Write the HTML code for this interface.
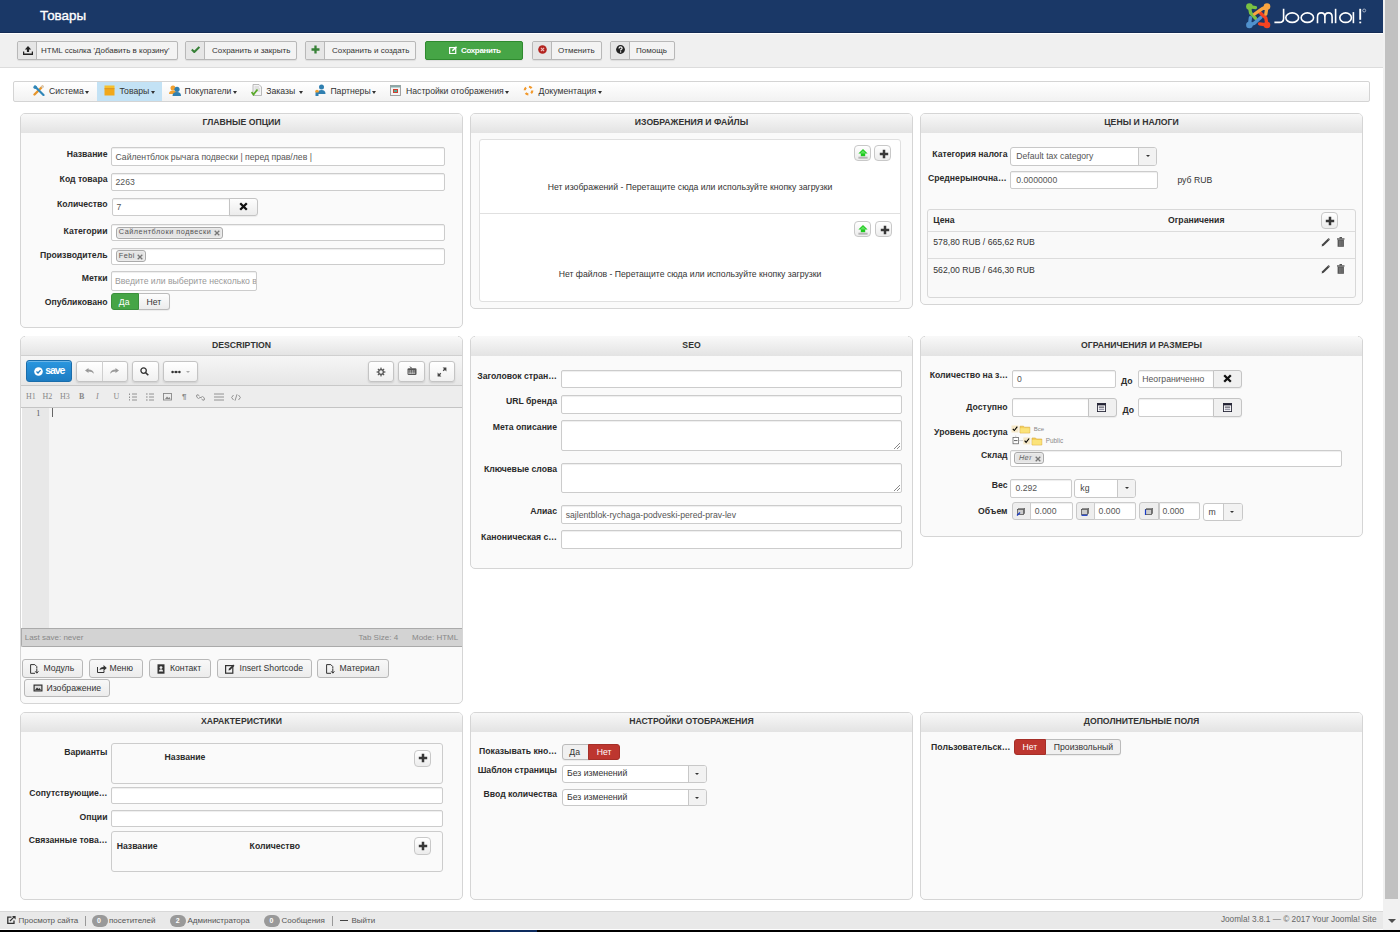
<!DOCTYPE html>
<html><head><meta charset="utf-8">
<style>
*{box-sizing:border-box;margin:0;padding:0}
html,body{width:1400px;height:932px;overflow:hidden;background:#fff}
body{position:relative;font-family:"Liberation Sans",sans-serif;font-size:8.67px;color:#333;line-height:10px}
.a{position:absolute}
.hdr{left:0;top:0;width:1383px;height:33px;background:#1a3867;border-bottom:1px solid #142c55}
.ptitle{left:40px;top:8px;font-size:13.4px;color:#fff;line-height:16px;-webkit-text-stroke:0.35px #fff}
.tbar{left:0;top:33px;width:1383px;height:35px;background:#f0f0f0;border-top:1px solid #fff;border-bottom:1px solid #dcdcdc}
.tb{position:absolute;top:41px;height:19px;border:1px solid #b8b8b8;border-radius:2px;background:#f3f3f3;box-shadow:0 1px 1px rgba(0,0,0,.08)}
.tb .ic{position:absolute;left:0;top:0;bottom:0;background:#e6e6e6;border-right:1px solid #b8b8b8;border-radius:2px 0 0 2px}
.tb .tx{position:absolute;top:4px;font-size:8px;color:#333;line-height:10px;white-space:nowrap}
.menu{left:13px;top:81px;width:1357px;height:21px;border:1px solid #d4d4d4;border-radius:2px;background:linear-gradient(#fff,#f2f2f2)}
.mi{position:absolute;top:5px;font-size:8.67px;color:#333;white-space:nowrap;line-height:10px}
.car{display:inline-block;width:0;height:0;border-left:2.8px solid transparent;border-right:2.8px solid transparent;border-top:3.2px solid #333;vertical-align:0px;margin-left:1.5px}
.pn{position:absolute;border:1px solid #d5d5d5;border-radius:5px;background:#fafafa;overflow:hidden}
.ph{position:absolute;left:0;top:0;right:0;height:19px;background:linear-gradient(#f8f8f8,#e3e3e3);text-align:center;font-weight:bold;line-height:10px;padding-top:2.8px;color:#333}
.sb{left:1383px;top:0;width:17px;height:932px;background:#f1f1f1}
.thumb{left:1385px;top:0;width:13px;height:899px;background:#c1c1c1}
.foot{left:0;top:911px;width:1383px;height:18px;background:#e9e9e9;border-top:1px solid #d8d8d8}
.black{left:0;top:930px;width:1400px;height:2px;background:#000}
.lbl{position:absolute;font-weight:bold;white-space:nowrap;text-align:right;color:#2a2a2a}
.in{position:absolute;background:#fff;border:1px solid #ccc;border-radius:2px;box-shadow:inset 0 1px 1px rgba(0,0,0,.07)}
.it{position:absolute;color:#555;white-space:nowrap}

.t{position:absolute;white-space:nowrap;line-height:10px}
.chip{position:absolute;background:#e4e4e4;border:1px solid #aaa;border-radius:3px;box-shadow:inset 0 0 2px #fff}
.btn{position:absolute;background:linear-gradient(#fdfdfd,#ececec);border:1px solid #bbb;border-radius:3px;box-shadow:0 1px 1px rgba(0,0,0,.06)}
.xsvg{position:absolute}

.sbtn{position:absolute;width:17px;height:16px;background:linear-gradient(#fff,#ececec);border:1px solid #c8c8c8;border-radius:4px}
.plus{position:absolute;width:10px;height:10px}
.sel{position:absolute;background:#fff;border:1px solid #c8c8c8;border-radius:3px}
.sel .dd{position:absolute;right:0;top:0;bottom:0;width:18px;background:#f2f2f2;border-left:1px solid #c8c8c8;border-radius:0 2px 2px 0}
.sel .dd:after{content:"";position:absolute;left:6.5px;top:7px;border-left:2.5px solid transparent;border-right:2.5px solid transparent;border-top:2.6px solid #333}

.eb{position:absolute;background:linear-gradient(#fff,#f0f0f0);border:1px solid #c4c4c4;border-radius:3px;box-shadow:0 1px 2px rgba(0,0,0,.12)}
.md{position:absolute;top:392px;font-family:"Liberation Serif",serif;font-size:8px;color:#888;line-height:10px}
.ib{position:absolute;top:659px;height:18.5px;background:linear-gradient(#f8f8f8,#ececec);border:1px solid #b8b8b8;border-radius:3px}
.ib .t{top:3px;color:#333}

.ta:after{content:"";position:absolute;right:1px;bottom:1px;width:6px;height:6px;background:linear-gradient(135deg,transparent 45%,#888 45%,#888 55%,transparent 55%,transparent 70%,#888 70%,#888 80%,transparent 80%)}
.addon{position:absolute;background:#eee;border:1px solid #c8c8c8;border-radius:3px}
</style></head><body>
<div class="a hdr"></div>
<div class="a ptitle">Товары</div>
<div class="a tbar"></div>
<div class="tb" style="left:17px;width:161px"><div class="ic" style="width:19.2px"><svg class="a" style="left:5px;top:4px" width="10" height="9" viewBox="0 0 10 9"><path d="M5 0L8.2 3.4H6.1V6H3.9V3.4H1.8Z" fill="#222"/><path d="M0.5 5.5V8.3H9.5V5.5" stroke="#222" stroke-width="1.5" fill="none"/></svg></div><div class="tx" style="left:23px">HTML ссылка 'Добавить в корзину'</div></div>
<div class="tb" style="left:185px;width:112px"><div class="ic" style="width:19.2px"><svg class="a" style="left:5.2px;top:4.2px" width="9" height="7" viewBox="0 0 9 7"><path d="M0.8 3.6L3.3 6L8.4 0.9" stroke="#378137" stroke-width="2.1" fill="none"/></svg></div><div class="tx" style="left:26px">Сохранить и закрыть</div></div>
<div class="tb" style="left:305px;width:111px"><div class="ic" style="width:19.2px"><svg class="a" style="left:5.3px;top:3.2px" width="9" height="9" viewBox="0 0 9 9"><path d="M4.5 0.5V8.5M0.5 4.5H8.5" stroke="#378137" stroke-width="2.3"/></svg></div><div class="tx" style="left:26px">Сохранить и создать</div></div>
<div class="tb" style="left:425px;width:98px;background:#46a546;border-color:#2f8a2f"><svg class="a" style="left:23px;top:3.8px" width="8.3" height="8.3" viewBox="0 0 9 9"><rect x="0.7" y="1.7" width="6.6" height="6.6" fill="none" stroke="#fff" stroke-width="1.3"/><path d="M3.2 5.8L3.6 4.2L7.6 0.3L8.7 1.4L4.7 5.4Z" fill="#fff"/></svg><div class="tx" style="left:35px;color:#fff;font-weight:bold;letter-spacing:-0.35px">Сохранить</div></div>
<div class="tb" style="left:532px;width:70px"><div class="ic" style="width:19.2px"><svg class="a" style="left:4.8px;top:3px" width="9" height="9" viewBox="0 0 9 9"><circle cx="4.5" cy="4.5" r="4.3" fill="#b3231f"/><path d="M2.9 2.9L6.1 6.1M6.1 2.9L2.9 6.1" stroke="#f0c0c0" stroke-width="1.1"/></svg></div><div class="tx" style="left:25px">Отменить</div></div>
<div class="tb" style="left:610px;width:65px"><div class="ic" style="width:19.2px"><svg class="a" style="left:4.8px;top:3px" width="9" height="9" viewBox="0 0 9 9"><circle cx="4.5" cy="4.5" r="4.4" fill="#222"/><path d="M3 3.4Q3 1.9 4.6 1.9Q6.1 1.9 6.1 3.2Q6.1 4 5.1 4.5Q4.6 4.8 4.6 5.5" stroke="#fff" stroke-width="1.2" fill="none"/><rect x="4" y="6.3" width="1.2" height="1.2" fill="#fff"/></svg></div><div class="tx" style="left:25px">Помощь</div></div>

<div class="a menu"></div>
<div class="a" style="left:97px;top:82px;width:65px;height:19px;background:#c3e2f5"></div>
<svg class="a" style="left:33px;top:85px" width="12" height="11" viewBox="0 0 12 11"><path d="M1.5 9.5L9.5 1.5" stroke="#e8962a" stroke-width="2.4" stroke-linecap="round"/><path d="M2 1.5L10.5 10" stroke="#2f86b8" stroke-width="2.2" stroke-linecap="round"/><circle cx="2.2" cy="2.2" r="1.8" fill="#2f86b8"/><circle cx="9.5" cy="1.8" r="1.2" fill="#cfcfcf"/></svg>
<div class="mi" style="left:49px;top:86px">Система<span class="car"></span></div>
<svg class="a" style="left:104px;top:85px" width="11" height="11" viewBox="0 0 11 11"><rect x="0.5" y="0.5" width="10" height="3" fill="#f6c02d"/><rect x="0.5" y="3.5" width="10" height="7" fill="#f1a81b"/><rect x="0.5" y="3.3" width="10" height="0.8" fill="#d98b10"/></svg>
<div class="mi" style="left:119.5px;top:86px">Товары<span class="car"></span></div>
<svg class="a" style="left:169px;top:85px" width="12" height="11" viewBox="0 0 12 11"><circle cx="4" cy="3" r="2.5" fill="#f0a030"/><path d="M0 9Q0 5.5 4 5.5Q8 5.5 8 9Z" fill="#f0a030"/><circle cx="8" cy="4.3" r="2.6" fill="#2f7fb0"/><path d="M3.5 11Q3.5 7 8 7Q12 7 12 11Z" fill="#2f7fb0"/></svg>
<div class="mi" style="left:184.5px;top:86px">Покупатели<span class="car"></span></div>
<svg class="a" style="left:251px;top:84px" width="11" height="12" viewBox="0 0 11 12"><path d="M2 0.5H8L10.5 3V11.5H2Z" fill="#f4f4f4" stroke="#aaa" stroke-width="0.8"/><path d="M3.5 3H8M3.5 5H9M3.5 7H9" stroke="#bbb" stroke-width="0.7"/><path d="M0.5 8L2.5 10.5L6.5 5.5" stroke="#5aaa2a" stroke-width="1.8" fill="none"/></svg>
<div class="mi" style="left:266.3px;top:86px">Заказы <span class="car"></span></div>
<svg class="a" style="left:314px;top:84px" width="12" height="12" viewBox="0 0 12 12"><circle cx="7.5" cy="3" r="2.5" fill="#2f7fb0"/><path d="M3.5 10Q3.5 6 7.5 6Q11.5 6 11.5 10Z" fill="#2f7fb0"/><circle cx="3" cy="7.5" r="1.8" fill="#f0a030"/><rect x="1.5" y="8.5" width="3" height="3.5" fill="#2f7fb0"/></svg>
<div class="mi" style="left:330.4px;top:86px">Партнеры<span class="car"></span></div>
<svg class="a" style="left:390px;top:85px" width="11" height="11" viewBox="0 0 11 11"><rect x="0.5" y="0.5" width="10" height="10" fill="#f4f4f4" stroke="#999" stroke-width="0.9"/><rect x="0.5" y="0.5" width="10" height="2" fill="#8aa"/><rect x="3" y="4" width="5" height="4" fill="#d04030"/><rect x="4" y="5" width="3" height="2" fill="#5a9"/></svg>
<div class="mi" style="left:406px;top:86px">Настройки отображения<span class="car"></span></div>
<svg class="a" style="left:523px;top:85px" width="11" height="11" viewBox="0 0 11 11"><circle cx="5.5" cy="5.5" r="3.8" fill="none" stroke="#f29a2e" stroke-width="2.2" stroke-dasharray="3 2.97"/></svg>
<div class="mi" style="left:538.6px;top:86px">Документация<span class="car"></span></div>


<div class="pn" style="left:20px;top:113px;width:443px;height:215px"><div class="ph">ГЛАВНЫЕ ОПЦИИ</div></div>
<div class="pn" style="left:470px;top:113px;width:443px;height:196px"><div class="ph">ИЗОБРАЖЕНИЯ И ФАЙЛЫ</div></div>
<div class="pn" style="left:920px;top:113px;width:443px;height:192px"><div class="ph">ЦЕНЫ И НАЛОГИ</div></div>
<div class="pn" style="left:20px;top:336px;width:443px;height:368px"><div class="ph">DESCRIPTION</div></div>
<div class="pn" style="left:470px;top:336px;width:443px;height:233px"><div class="ph">SEO</div></div>
<div class="pn" style="left:920px;top:336px;width:443px;height:201px"><div class="ph">ОГРАНИЧЕНИЯ И РАЗМЕРЫ</div></div>
<div class="pn" style="left:20px;top:712px;width:443px;height:188px"><div class="ph">ХАРАКТЕРИСТИКИ</div></div>
<div class="pn" style="left:470px;top:712px;width:443px;height:188px"><div class="ph">НАСТРОЙКИ ОТОБРАЖЕНИЯ</div></div>
<div class="pn" style="left:920px;top:712px;width:443px;height:188px"><div class="ph">ДОПОЛНИТЕЛЬНЫЕ ПОЛЯ</div></div>


<div class="a" style="left:25px;top:336px;width:433px;height:1px;background:#f8f8f8"></div><div class="a" style="left:475px;top:336px;width:433px;height:1px;background:#f8f8f8"></div><div class="a" style="left:925px;top:336px;width:433px;height:1px;background:#f8f8f8"></div>
<!-- P1 content -->
<div class="t lbl" style="left:20px;width:87.5px;top:149px">Название</div>
<div class="in" style="left:111px;top:147px;width:334px;height:19px"></div>
<div class="t it" style="left:115.5px;top:152px">Сайлентблок рычага подвески | перед прав/лев |</div>
<div class="t lbl" style="left:20px;width:87.5px;top:174px">Код товара</div>
<div class="in" style="left:111px;top:173px;width:334px;height:18px"></div>
<div class="t it" style="left:115.5px;top:177px">2263</div>
<div class="t lbl" style="left:20px;width:87.5px;top:199px">Количество</div>
<div class="in" style="left:112px;top:198px;width:118px;height:18px;border-radius:2px 0 0 2px"></div>
<div class="t it" style="left:116.5px;top:202px">7</div>
<div class="btn" style="left:229px;top:198px;width:29px;height:18px;border-radius:0 3px 3px 0;border-color:#c4c4c4"></div>
<svg class="xsvg" style="left:239px;top:202px" width="9" height="9" viewBox="0 0 9 9"><path d="M1.2 1.2L7.8 7.8M7.8 1.2L1.2 7.8" stroke="#111" stroke-width="2.3"/></svg>
<div class="t lbl" style="left:20px;width:87.5px;top:226px">Категории</div>
<div class="in" style="left:111px;top:224px;width:334px;height:17px"></div>
<div class="chip" style="left:115.5px;top:226.5px;width:107px;height:12px"></div>
<div class="t" style="left:118.8px;top:227px;font-size:7.3px;letter-spacing:0.52px;color:#555">Сайлентблоки подвески</div>
<svg class="xsvg" style="left:214px;top:230px" width="6" height="6" viewBox="0 0 6 6"><path d="M0.7 0.7L5.3 5.3M5.3 0.7L0.7 5.3" stroke="#777" stroke-width="1.3"/></svg>
<div class="t lbl" style="left:20px;width:87.5px;top:249.5px">Производитель</div>
<div class="in" style="left:111px;top:248px;width:334px;height:17px"></div>
<div class="chip" style="left:115.5px;top:250px;width:30px;height:12px"></div>
<div class="t" style="left:118.8px;top:250.5px;font-size:7.3px;letter-spacing:0.5px;color:#555">Febi</div>
<svg class="xsvg" style="left:137px;top:254px" width="6" height="6" viewBox="0 0 6 6"><path d="M0.7 0.7L5.3 5.3M5.3 0.7L0.7 5.3" stroke="#777" stroke-width="1.3"/></svg>
<div class="t lbl" style="left:20px;width:87.5px;top:273px">Метки</div>
<div class="in" style="left:111px;top:271px;width:146px;height:20px;overflow:hidden"><div class="t" style="left:3px;top:4px;color:#999">Введите или выберите несколько в</div></div>
<div class="t lbl" style="left:20px;width:87.5px;top:297px">Опубликовано</div>
<div class="a" style="left:111px;top:293px;width:28px;height:17px;background:#46a546;border:1px solid #3c8f3c;border-radius:3px 0 0 3px"></div>
<div class="t" style="left:118.8px;top:297px;color:#fff">Да</div>
<div class="btn" style="left:139px;top:293px;width:31px;height:17px;border-radius:0 3px 3px 0;border-left:none"></div>
<div class="t" style="left:146.5px;top:297px;color:#333">Нет</div>


<!-- P2 content -->
<div class="a" style="left:479px;top:139px;width:422px;height:163px;background:#fff;border:1px solid #e0e0e0;border-radius:3px"></div>
<div class="a" style="left:480px;top:213px;width:420px;height:1px;background:#e0e0e0"></div>
<div class="sbtn" style="left:854px;top:145px"></div><svg class="a" style="left:857.5px;top:148.5px" width="10" height="10" viewBox="0 0 10 10"><path d="M5 0L9.6 4.6H7.2V7.3H2.8V4.6H0.4Z" fill="#1ec81e"/><path d="M5 1.2L8 4.4H2Z" fill="#8cf58c" opacity=".55"/><rect x="0.4" y="7.7" width="9.2" height="2" fill="#b5b5b5"/></svg>
<div class="sbtn" style="left:874px;top:145px"></div><svg class="a" style="left:878.5px;top:148.5px" width="10" height="10" viewBox="0 0 10 10"><path d="M5 0.8V9.2M0.8 5H9.2" stroke="#383838" stroke-width="2.5"/></svg>
<div class="t" style="left:479px;width:422px;text-align:center;top:182px;color:#333">Нет изображений - Перетащите сюда или используйте кнопку загрузки</div>
<div class="sbtn" style="left:854px;top:221px"></div><svg class="a" style="left:857.5px;top:224.5px" width="10" height="10" viewBox="0 0 10 10"><path d="M5 0L9.6 4.6H7.2V7.3H2.8V4.6H0.4Z" fill="#1ec81e"/><path d="M5 1.2L8 4.4H2Z" fill="#8cf58c" opacity=".55"/><rect x="0.4" y="7.7" width="9.2" height="2" fill="#b5b5b5"/></svg>
<div class="sbtn" style="left:875px;top:221px"></div><svg class="a" style="left:879.5px;top:224.5px" width="10" height="10" viewBox="0 0 10 10"><path d="M5 0.8V9.2M0.8 5H9.2" stroke="#383838" stroke-width="2.5"/></svg>
<div class="t" style="left:479px;width:422px;text-align:center;top:269px;color:#333">Нет файлов - Перетащите сюда или используйте кнопку загрузки</div>

<!-- P3 content -->
<div class="t lbl" style="left:920px;width:87.5px;top:148.5px">Категория налога</div>
<div class="sel" style="left:1010px;top:147px;width:147px;height:19px"><div class="dd"></div></div>
<div class="t it" style="left:1016.3px;top:151px">Default tax category</div>
<div class="t lbl" style="left:920px;width:87.5px;top:172.5px;text-align:left;padding-left:8px">Среднерыночна…</div>
<div class="in" style="left:1010px;top:171px;width:148px;height:18px"></div>
<div class="t it" style="left:1016.3px;top:175px">0.0000000</div>
<div class="t" style="left:1177.4px;top:175px;color:#333">руб RUB</div>
<div class="a" style="left:927px;top:209px;width:429px;height:89px;background:#f9f9f9;border:1px solid #d8d8d8;border-radius:3px"></div>
<div class="a" style="left:928px;top:231px;width:427px;height:1px;background:#dcdcdc"></div>
<div class="a" style="left:928px;top:258px;width:427px;height:1px;background:#dcdcdc"></div>
<div class="t lbl" style="left:933.3px;top:215px;text-align:left">Цена</div>
<div class="t lbl" style="left:1168px;top:215px;text-align:left">Ограничения</div>
<div class="sbtn" style="left:1321px;top:212px;height:17px"></div><svg class="a" style="left:1325px;top:216px" width="10" height="10" viewBox="0 0 10 10"><path d="M5 0.8V9.2M0.8 5H9.2" stroke="#383838" stroke-width="2.5"/></svg>
<div class="t" style="left:933.3px;top:237px;color:#333">578,80 RUB / 665,62 RUB</div>
<div class="t" style="left:933.3px;top:264.5px;color:#333">562,00 RUB / 646,30 RUB</div>
<svg class="a" style="left:1321px;top:237px" width="10" height="10" viewBox="0 0 10 10"><path d="M0.6 9.4L1.2 7.3L7.6 0.9L9.1 2.4L2.7 8.8Z" fill="#444"/><path d="M7 1.5L8.5 3" stroke="#fff" stroke-width="0.5"/></svg><svg class="a" style="left:1337px;top:237px" width="8" height="10" viewBox="0 0 8 10"><rect x="0" y="1.3" width="7.5" height="1.3" fill="#555"/><rect x="2.5" y="0" width="2.5" height="1.5" fill="#555"/><path d="M0.6 2.6H6.9V9.8H0.6Z" fill="#555"/><path d="M2.4 3.5V9M3.75 3.5V9M5.1 3.5V9" stroke="#999" stroke-width="0.5"/></svg><svg class="a" style="left:1321px;top:264px" width="10" height="10" viewBox="0 0 10 10"><path d="M0.6 9.4L1.2 7.3L7.6 0.9L9.1 2.4L2.7 8.8Z" fill="#444"/><path d="M7 1.5L8.5 3" stroke="#fff" stroke-width="0.5"/></svg><svg class="a" style="left:1337px;top:264px" width="8" height="10" viewBox="0 0 8 10"><rect x="0" y="1.3" width="7.5" height="1.3" fill="#555"/><rect x="2.5" y="0" width="2.5" height="1.5" fill="#555"/><path d="M0.6 2.6H6.9V9.8H0.6Z" fill="#555"/><path d="M2.4 3.5V9M3.75 3.5V9M5.1 3.5V9" stroke="#999" stroke-width="0.5"/></svg>

<!-- P4 content: description editor -->
<div class="a" style="left:21px;top:355px;width:441px;height:31px;background:linear-gradient(#f6f6f6,#e6e6e6);border-top:1px solid #d0d0d0;border-bottom:1px solid #c8c8c8"></div>
<div class="a" style="left:26px;top:360px;width:46px;height:22px;background:linear-gradient(#2a97e0,#1d7cc2);border:1px solid #1a6dab;border-radius:3px;box-shadow:inset 0 1px 0 rgba(255,255,255,.3)"></div>
<svg class="a" style="left:33.9px;top:366.5px" width="9" height="9" viewBox="0 0 9 9"><circle cx="4.5" cy="4.5" r="4.3" fill="#fff"/><path d="M2.5 4.6L4 6L6.6 3.1" stroke="#1d7cc2" stroke-width="1.3" fill="none"/></svg>
<div class="t" style="left:45.3px;top:364.3px;font-size:10.5px;font-weight:bold;letter-spacing:-1.1px;color:#fff;line-height:12px">save</div>
<div class="eb" style="left:75.5px;top:360.5px;width:52px;height:21px"></div>
<div class="a" style="left:101.5px;top:361px;width:1px;height:20px;background:#cfcfcf"></div>
<svg class="a" style="left:85px;top:368px" width="9" height="6" viewBox="0 0 9 6"><path d="M0 2.5L3.5 0V1.6Q8 1.6 9 5.8Q7 3.6 3.5 3.6V5Z" fill="#999"/></svg>
<svg class="a" style="left:110px;top:368px" width="9" height="6" viewBox="0 0 9 6"><path d="M9 2.5L5.5 0V1.6Q1 1.6 0 5.8Q2 3.6 5.5 3.6V5Z" fill="#999"/></svg>
<div class="eb" style="left:131.5px;top:360.5px;width:27px;height:21px"></div>
<svg class="a" style="left:140px;top:367px" width="9" height="9" viewBox="0 0 9 9"><circle cx="3.6" cy="3.6" r="2.7" fill="none" stroke="#333" stroke-width="1.3"/><path d="M5.5 5.5L8.3 8.3" stroke="#333" stroke-width="1.6"/></svg>
<div class="eb" style="left:162.5px;top:360.5px;width:35px;height:21px"></div>
<svg class="a" style="left:170.5px;top:369.5px" width="20" height="4" viewBox="0 0 20 4"><circle cx="1.5" cy="2" r="1.2" fill="#333"/><circle cx="5" cy="2" r="1.2" fill="#333"/><circle cx="8.5" cy="2" r="1.2" fill="#333"/><rect x="1.5" y="1.6" width="7" height="0.8" fill="#333"/><path d="M15 1L19 1L17 3Z" fill="#aaa"/></svg>
<div class="eb" style="left:367.5px;top:360.5px;width:26px;height:21px"></div>
<svg class="a" style="left:376px;top:366.5px" width="10" height="10" viewBox="0 0 10 10"><g fill="#555"><circle cx="5" cy="5" r="2.9"/><rect x="4.35" y="0.6" width="1.3" height="8.8"/><rect x="0.6" y="4.35" width="8.8" height="1.3"/><rect x="4.35" y="0.6" width="1.3" height="8.8" transform="rotate(45 5 5)"/><rect x="4.35" y="0.6" width="1.3" height="8.8" transform="rotate(-45 5 5)"/></g><circle cx="5" cy="5" r="1.7" fill="#f2f2f2"/></svg>
<div class="eb" style="left:397.5px;top:360.5px;width:27px;height:21px"></div>
<svg class="a" style="left:406.5px;top:366px" width="10" height="10" viewBox="0 0 10 10"><path d="M3 0.5Q3 2 5 2" stroke="#444" stroke-width="0.8" fill="none"/><rect x="0.5" y="2.2" width="9" height="6.8" rx="1.2" fill="#555"/><path d="M2 4V8M3.7 4V8M5.4 4V8M7.1 4V8" stroke="#ddd" stroke-width="0.6"/><rect x="1.6" y="6.8" width="6.6" height="0.7" fill="#ddd"/></svg>
<div class="eb" style="left:428.5px;top:360.5px;width:26px;height:21px"></div>
<svg class="a" style="left:436.5px;top:366.5px" width="10" height="10" viewBox="0 0 10 10"><path d="M1.5 8.5L3.8 6.2M8.5 1.5L6.2 3.8" stroke="#444" stroke-width="1.3"/><path d="M5.6 0.6H9.4V4.4Z M0.6 5.6V9.4H4.4Z" fill="#444"/></svg>
<div class="a" style="left:21px;top:386px;width:441px;height:22px;background:#ededed;border-bottom:1px solid #c4c4c4"></div>
<div class="md" style="left:26px">H1</div><div class="md" style="left:42.5px">H2</div><div class="md" style="left:60px">H3</div>
<div class="md" style="left:79px;font-weight:bold">B</div><div class="md" style="left:96px;font-style:italic">I</div><div class="md" style="left:113.5px">U</div>
<svg class="a" style="left:128.5px;top:393px" width="8" height="8" viewBox="0 0 8 8"><path d="M3 1H8M3 4H8M3 7H8" stroke="#888" stroke-width="0.9"/><path d="M0.5 0.5V2M0.5 3.5V5M0.5 6.2V7.5" stroke="#888" stroke-width="0.9"/></svg>
<svg class="a" style="left:145.5px;top:393px" width="8" height="8" viewBox="0 0 8 8"><path d="M3 1H8M3 4H8M3 7H8" stroke="#888" stroke-width="0.9"/><path d="M0 1H1.6M0 4H1.6M0 7H1.6" stroke="#888" stroke-width="1.2"/></svg>
<svg class="a" style="left:162.5px;top:393px" width="9" height="8" viewBox="0 0 9 8"><rect x="0.5" y="0.5" width="8" height="6.5" fill="none" stroke="#888" stroke-width="0.9"/><path d="M2 6L4 3.5L5.5 5L6.5 4L7.5 6Z" fill="#888"/></svg>
<div class="md" style="left:182px;font-weight:bold;font-family:'Liberation Sans'">&#182;</div>
<svg class="a" style="left:196px;top:393.5px" width="9" height="7" viewBox="0 0 9 7"><path d="M3.5 2L2 0.8Q0.5 0.5 0.5 2Q0.5 3 2 4.2L2.7 5M5.5 5L7 6.2Q8.5 6.5 8.5 5Q8.5 4 7 2.8L6.3 2M3 4L6 3" stroke="#888" stroke-width="0.9" fill="none"/></svg>
<svg class="a" style="left:213.5px;top:393px" width="10" height="8" viewBox="0 0 10 8"><path d="M0 1H10M0 4H10M0 7H10" stroke="#888" stroke-width="0.9"/></svg>
<svg class="a" style="left:231px;top:393.5px" width="10" height="7" viewBox="0 0 10 7"><path d="M2.5 1L0.6 3.5L2.5 6M7.5 1L9.4 3.5L7.5 6M6 0.3L4 6.7" stroke="#888" stroke-width="0.9" fill="none"/></svg>
<div class="a" style="left:21px;top:408px;width:441px;height:220px;background:#f4f4f4"></div>
<div class="a" style="left:22px;top:408px;width:27px;height:220px;background:#e8e8e8"></div><div class="a" style="left:21px;top:408px;width:1px;height:220px;background:#fff"></div>
<div class="t" style="left:36.3px;top:408.5px;font-family:'Liberation Serif',serif;font-size:8px;color:#555">1</div>
<div class="a" style="left:52px;top:408px;width:1px;height:9px;background:#666"></div>
<div class="a" style="left:21px;top:628px;width:441px;height:19px;background:#d3d3d3;border:1px solid #aaa;border-right:none;border-radius:0 0 0 2px"></div>
<div class="t" style="left:24.7px;top:633px;font-size:8px;color:#888">Last save: never</div>
<div class="t" style="left:358.5px;top:633px;font-size:8px;color:#888">Tab Size: 4</div>
<div class="t" style="left:412px;top:633px;font-size:8px;color:#888">Mode: HTML</div>
<div class="ib" style="left:21.5px;width:61px"><svg class="a" style="left:7.5px;top:3.5px" width="9" height="10" viewBox="0 0 9 10"><path d="M5 9.3H0.6V0.6H4.8L6.8 2.6V4.2" fill="none" stroke="#333" stroke-width="1"/><path d="M6.8 4.5V9M5.2 7.3L6.8 9.2L8.4 7.3" stroke="#333" stroke-width="1" fill="none"/></svg><div class="t" style="left:21px">Модуль</div></div>
<div class="ib" style="left:88.5px;width:54px"><svg class="a" style="left:7px;top:4.5px" width="10" height="8" viewBox="0 0 10 8"><path d="M0.5 2V7.5H7V5.5" fill="none" stroke="#333" stroke-width="1"/><path d="M2.5 5Q3 2 6.5 2V0L9.8 3L6.5 6V4Q4.5 4 2.5 5Z" fill="#333"/></svg><div class="t" style="left:20px">Меню</div></div>
<div class="ib" style="left:149px;width:62px"><svg class="a" style="left:6.5px;top:3.5px" width="8" height="10" viewBox="0 0 8 10"><rect x="0.5" y="0.3" width="7" height="9.4" fill="#333"/><circle cx="4" cy="3.6" r="1.4" fill="#eee"/><path d="M1.8 7.5Q2 5.3 4 5.3Q6 5.3 6.2 7.5Z" fill="#eee"/></svg><div class="t" style="left:20px">Контакт</div></div>
<div class="ib" style="left:217px;width:95px"><svg class="a" style="left:7px;top:3.5px" width="10" height="10" viewBox="0 0 10 10"><rect x="0.6" y="1.6" width="7.2" height="7.6" fill="none" stroke="#333" stroke-width="1.2"/><path d="M3.5 6.5L3.9 4.8L8.2 0.5L9.5 1.8L5.2 6.1Z" fill="#333"/></svg><div class="t" style="left:21.5px">Insert Shortcode</div></div>
<div class="ib" style="left:317px;width:72px"><svg class="a" style="left:7.5px;top:3.5px" width="9" height="10" viewBox="0 0 9 10"><path d="M5 9.3H0.6V0.6H4.8L6.8 2.6V4.2" fill="none" stroke="#333" stroke-width="1"/><path d="M6.8 4.5V9M5.2 7.3L6.8 9.2L8.4 7.3" stroke="#333" stroke-width="1" fill="none"/></svg><div class="t" style="left:21.5px">Материал</div></div>
<div class="ib" style="left:24px;top:678.5px;width:86px;height:18px"><svg class="a" style="left:8px;top:4px" width="10" height="8" viewBox="0 0 10 8"><rect x="0.5" y="0.5" width="9" height="7" fill="#333"/><rect x="1.7" y="1.7" width="6.6" height="4.6" fill="#ddd"/><path d="M2 6L4 3.5L5.5 5L6.5 4L8 6Z" fill="#333"/></svg><div class="t" style="left:21.5px">Изображение</div></div>


<!-- P5 SEO -->
<div class="t lbl" style="left:457px;width:100px;top:370.7px">Заголовок стран…</div>
<div class="in" style="left:561px;top:370px;width:341px;height:18px"></div>
<div class="t lbl" style="left:457px;width:100px;top:396px">URL бренда</div>
<div class="in" style="left:561px;top:395px;width:341px;height:19px"></div>
<div class="t lbl" style="left:457px;width:100px;top:421.8px">Мета описание</div>
<div class="in ta" style="left:561px;top:420px;width:341px;height:31px"></div>
<div class="t lbl" style="left:457px;width:100px;top:464px">Ключевые слова</div>
<div class="in ta" style="left:561px;top:463px;width:341px;height:30px"></div>
<div class="t lbl" style="left:457px;width:100px;top:505.6px">Алиас</div>
<div class="in" style="left:561px;top:505px;width:341px;height:19px"></div>
<div class="t it" style="left:565.7px;top:509.5px">sajlentblok-rychaga-podveski-pered-prav-lev</div>
<div class="t lbl" style="left:457px;width:100px;top:531.6px">Каноническая с…</div>
<div class="in" style="left:561px;top:530px;width:341px;height:19px"></div>

<!-- P6 Ограничения -->
<div class="t lbl" style="left:908px;width:100px;top:370.2px">Количество на з…</div>
<div class="in" style="left:1012px;top:370px;width:104px;height:18px"></div>
<div class="t it" style="left:1017px;top:373.5px">0</div>
<div class="t lbl" style="left:1121px;top:376px">До</div>
<div class="in" style="left:1138px;top:370px;width:76px;height:18px;border-radius:2px 0 0 2px"></div>
<div class="t it" style="left:1142.3px;top:373.5px">Неограниченно</div>
<div class="btn" style="left:1213px;top:370px;width:29px;height:18px;border-radius:0 3px 3px 0;background:#f0f0f0;border-color:#c4c4c4"></div>
<svg class="a" style="left:1222.5px;top:373.5px" width="9" height="9" viewBox="0 0 9 9"><path d="M1.2 1.2L7.8 7.8M7.8 1.2L1.2 7.8" stroke="#111" stroke-width="2.3"/></svg>
<div class="t lbl" style="left:907.5px;width:100px;top:401.7px">Доступно</div>
<div class="in" style="left:1012px;top:398px;width:77px;height:19px;border-radius:2px 0 0 2px"></div>
<div class="btn" style="left:1088px;top:398px;width:29px;height:19px;border-radius:0 3px 3px 0;background:#f0f0f0;border-color:#c4c4c4"></div>
<svg class="a" style="left:1097px;top:402.5px" width="9" height="9" viewBox="0 0 9 9"><rect x="0.4" y="0.4" width="8.2" height="8.2" fill="#fff" stroke="#223" stroke-width="0.9"/><rect x="0.4" y="0.4" width="8.2" height="2" fill="#223"/><rect x="1.8" y="3.6" width="5.4" height="1" fill="#334"/><rect x="1.8" y="5.6" width="5.4" height="1.6" fill="#99a"/></svg>
<div class="t lbl" style="left:1122.6px;top:404.5px">До</div>
<div class="in" style="left:1138px;top:398px;width:76px;height:19px;border-radius:2px 0 0 2px"></div>
<div class="btn" style="left:1213px;top:398px;width:29px;height:19px;border-radius:0 3px 3px 0;background:#f0f0f0;border-color:#c4c4c4"></div>
<svg class="a" style="left:1222.5px;top:402.5px" width="9" height="9" viewBox="0 0 9 9"><rect x="0.4" y="0.4" width="8.2" height="8.2" fill="#fff" stroke="#223" stroke-width="0.9"/><rect x="0.4" y="0.4" width="8.2" height="2" fill="#223"/><rect x="1.8" y="3.6" width="5.4" height="1" fill="#334"/><rect x="1.8" y="5.6" width="5.4" height="1.6" fill="#99a"/></svg>
<div class="t lbl" style="left:907.5px;width:100px;top:426.6px">Уровень доступа</div>
<svg class="a" style="left:1011px;top:425px" width="60" height="21" viewBox="0 0 60 21">
<rect x="0.5" y="0.5" width="7" height="7" fill="#f5e8c8"/><path d="M1.8 3.8L3.3 5.5L6.3 1.6" stroke="#000" stroke-width="1.1" fill="none"/>
<path d="M9 1.2H12.5L13.5 2.2H18.8V8H9Z" fill="#f3cf5a" stroke="#d8a838" stroke-width="0.6"/><rect x="9.3" y="3.2" width="9.2" height="4.5" fill="#fbe37a"/>
<rect x="2" y="12.5" width="5.5" height="6.3" fill="#fff" stroke="#555" stroke-width="0.7"/><path d="M3 15.6H6.5" stroke="#333" stroke-width="0.8"/><path d="M4.75 10.5V12.4M7.6 15.6H12" stroke="#bbb" stroke-width="0.6"/>
<rect x="12.3" y="12.4" width="7" height="7" fill="#f5e8c8"/><path d="M13.6 15.7L15.1 17.4L18.1 13.5" stroke="#000" stroke-width="1.1" fill="none"/>
<path d="M21 13H24.5L25.5 14H30.8V20H21Z" fill="#f3cf5a" stroke="#d8a838" stroke-width="0.6"/><rect x="21.3" y="15" width="9.2" height="4.7" fill="#fbe37a"/>
</svg>
<div class="t" style="left:1033.7px;top:425.8px;font-size:6px;color:#888;line-height:6px">Все</div>
<div class="t" style="left:1045.7px;top:437.8px;font-size:6.4px;color:#888;line-height:6px">Public</div>
<div class="t lbl" style="left:907.5px;width:100px;top:449.9px">Склад</div>
<div class="in" style="left:1010px;top:450px;width:332px;height:17px"></div>
<div class="chip" style="left:1014.4px;top:452.4px;width:30px;height:12px"></div>
<div class="t" style="left:1019px;top:453px;font-size:7.3px;letter-spacing:.2px;color:#666;transform:skewX(-14deg)">Нет</div>
<svg class="xsvg" style="left:1035px;top:455.5px" width="6" height="6" viewBox="0 0 6 6"><path d="M0.7 0.7L5.3 5.3M5.3 0.7L0.7 5.3" stroke="#777" stroke-width="1.3"/></svg>
<div class="t lbl" style="left:907.5px;width:100px;top:479.8px">Вес</div>
<div class="in" style="left:1010px;top:479px;width:62px;height:19px"></div>
<div class="t it" style="left:1015.5px;top:483px">0.292</div>
<div class="sel" style="left:1074px;top:479px;width:62px;height:19px"><div class="dd"></div></div>
<div class="t it" style="left:1080.3px;top:483px;color:#444">kg</div>
<div class="t lbl" style="left:907.5px;width:100px;top:505.70000000000005px">Объем</div>
<div class="addon" style="left:1011.5px;top:502px;width:20px;height:18px;border-radius:3px 0 0 3px"></div><div class="in" style="left:1030.4px;top:502px;width:42.6px;height:18px;border-radius:0 2px 2px 0"></div>
<div class="addon" style="left:1075.5px;top:502px;width:20px;height:18px;border-radius:3px 0 0 3px"></div><div class="in" style="left:1094.3px;top:502px;width:41.7px;height:18px;border-radius:0 2px 2px 0"></div>
<div class="addon" style="left:1139.4px;top:502px;width:20px;height:18px;border-radius:3px 0 0 3px"></div><div class="in" style="left:1158.5px;top:502px;width:41.5px;height:18px;border-radius:0 2px 2px 0"></div>
<svg class="a" style="left:1016px;top:507.5px" width="9" height="8" viewBox="0 0 9 8"><rect x="1.5" y="1.5" width="6" height="5" fill="#ccc" stroke="#555" stroke-width="0.8"/><path d="M1.5 1.5L3 0.3H8.5L7.5 1.5M7.5 6.5L8.5 5.3V0.3" fill="none" stroke="#555" stroke-width="0.8"/><path d="M1 7.5L4 4.5" stroke="#1a3cc8" stroke-width="1.2"/></svg>
<svg class="a" style="left:1080px;top:507.5px" width="9" height="8" viewBox="0 0 9 8"><rect x="1.5" y="1.5" width="6" height="5" fill="#ccc" stroke="#555" stroke-width="0.8"/><path d="M1.5 1.5L3 0.3H8.5L7.5 1.5M7.5 6.5L8.5 5.3V0.3" fill="none" stroke="#555" stroke-width="0.8"/><path d="M1.5 7.3H7.5" stroke="#1a3cc8" stroke-width="1.2"/></svg>
<svg class="a" style="left:1144px;top:507.5px" width="9" height="8" viewBox="0 0 9 8"><rect x="1.5" y="1.5" width="6" height="5" fill="#ccc" stroke="#555" stroke-width="0.8"/><path d="M1.5 1.5L3 0.3H8.5L7.5 1.5M7.5 6.5L8.5 5.3V0.3" fill="none" stroke="#555" stroke-width="0.8"/><path d="M1.5 1.5V7" stroke="#1a3cc8" stroke-width="1.2"/></svg>
<div class="t it" style="left:1034.8px;top:505.5px">0.000</div>
<div class="t it" style="left:1098.6px;top:505.5px">0.000</div>
<div class="t it" style="left:1162.5px;top:505.5px">0.000</div>
<div class="sel" style="left:1203px;top:503px;width:40px;height:18px"><div class="dd" style="width:19.5px"></div></div>
<div class="t it" style="left:1208.5px;top:506.5px;color:#444">m</div>

<div class="a foot"></div>
<!-- P7 -->
<div class="t lbl" style="left:7.5px;width:100px;top:747.4px">Варианты</div>
<div class="a" style="left:111px;top:743px;width:332px;height:41px;background:#fafafa;border:1px solid #ccc;border-radius:3px"></div>
<div class="t lbl" style="left:164.5px;top:752.2px">Название</div>
<div class="sbtn" style="left:414px;top:749.5px;height:17.5px"></div><svg class="a" style="left:418px;top:753px" width="10" height="10" viewBox="0 0 10 10"><path d="M5 0.8V9.2M0.8 5H9.2" stroke="#383838" stroke-width="2.5"/></svg>
<div class="t lbl" style="left:7.5px;width:100px;top:788px">Сопутствующие…</div>
<div class="in" style="left:111px;top:787px;width:332px;height:17px"></div>
<div class="t lbl" style="left:7.5px;width:100px;top:811.6px">Опции</div>
<div class="in" style="left:111px;top:810px;width:332px;height:17px"></div>
<div class="t lbl" style="left:7.5px;width:100px;top:834.5px">Связанные това…</div>
<div class="a" style="left:111px;top:831px;width:332px;height:41px;background:#fafafa;border:1px solid #ccc;border-radius:3px"></div>
<div class="t lbl" style="left:116.7px;top:840.6px">Название</div>
<div class="t lbl" style="left:249.6px;top:840.6px">Количество</div>
<div class="sbtn" style="left:414px;top:837.3px;height:17.5px"></div><svg class="a" style="left:418px;top:841px" width="10" height="10" viewBox="0 0 10 10"><path d="M5 0.8V9.2M0.8 5H9.2" stroke="#383838" stroke-width="2.5"/></svg>

<!-- P8 -->
<div class="t lbl" style="left:457px;width:100px;top:746.4px">Показывать кно…</div>
<div class="btn" style="left:561.5px;top:744.3px;width:28px;height:15.5px;border-radius:3px 0 0 3px;background:#f0f0f0"></div>
<div class="t" style="left:569.3px;top:747px;color:#333">Да</div>
<div class="a" style="left:588.3px;top:744.3px;width:31.6px;height:15.5px;background:#bd362f;border:1px solid #a52f28;border-radius:0 3px 3px 0"></div>
<div class="t" style="left:596.7px;top:747px;color:#fff">Нет</div>
<div class="t lbl" style="left:457px;width:100px;top:765.2px">Шаблон страницы</div>
<div class="sel" style="left:561.5px;top:765.3px;width:145px;height:17.3px"><div class="dd"></div></div>
<div class="t" style="left:567px;top:767.7px;color:#333">Без изменений</div>
<div class="t lbl" style="left:457px;width:100px;top:788.6px">Ввод количества</div>
<div class="sel" style="left:561.5px;top:788.5px;width:145px;height:17.3px"><div class="dd"></div></div>
<div class="t" style="left:567px;top:791.7px;color:#333">Без изменений</div>

<!-- P9 -->
<div class="t lbl" style="left:910.3px;width:100px;top:741.8px">Пользовательск…</div>
<div class="a" style="left:1014.3px;top:739px;width:32px;height:15.7px;background:#bd362f;border:1px solid #a52f28;border-radius:3px 0 0 3px"></div>
<div class="t" style="left:1022.4px;top:741.8px;color:#fff">Нет</div>
<div class="btn" style="left:1045.8px;top:739px;width:75.5px;height:15.7px;border-radius:0 3px 3px 0;background:#f0f0f0;border-left:none"></div>
<div class="t" style="left:1053.8px;top:741.8px;color:#333">Произвольный</div>

<!-- footer -->
<svg class="a" style="left:7px;top:915.5px" width="9" height="8" viewBox="0 0 9 8"><path d="M4.5 1.2H0.8V7.3H7V4.5" fill="none" stroke="#333" stroke-width="1.3"/><path d="M3 5L7.2 0.9" stroke="#333" stroke-width="1.2"/><path d="M5 0H8.6V3.6Z" fill="#333"/></svg>
<div class="t" style="left:18.5px;top:916px;font-size:8px;color:#555">Просмотр сайта</div>
<div class="a" style="left:84.5px;top:916px;width:1px;height:10px;background:#999"></div>
<div class="a" style="left:91.5px;top:915px;width:16px;height:11.5px;border-radius:6px;background:#999"></div>
<div class="t" style="left:97px;top:916px;font-size:7px;font-weight:bold;color:#fff">0</div>
<div class="t" style="left:109px;top:916px;font-size:8px;color:#555">посетителей</div>
<div class="a" style="left:170px;top:915px;width:16px;height:11.5px;border-radius:6px;background:#999"></div>
<div class="t" style="left:175.8px;top:916px;font-size:7px;font-weight:bold;color:#fff">2</div>
<div class="t" style="left:187.5px;top:916px;font-size:8px;color:#555">Администратора</div>
<div class="a" style="left:263.5px;top:915px;width:16.5px;height:11.5px;border-radius:6px;background:#999"></div>
<div class="t" style="left:269.5px;top:916px;font-size:7px;font-weight:bold;color:#fff">0</div>
<div class="t" style="left:281.5px;top:916px;font-size:8px;color:#555">Сообщения</div>
<div class="a" style="left:332px;top:916px;width:1px;height:10px;background:#999"></div>
<div class="a" style="left:340px;top:919.5px;width:7.5px;height:1.6px;background:#444"></div>
<div class="t" style="left:351.5px;top:916px;font-size:8px;color:#555">Выйти</div>
<div class="t" style="left:1220.9px;top:915.3px;font-size:8.25px;color:#666">Joomla! 3.8.1 — © 2017 Your Joomla! Site</div>

<div class="a sb"></div>
<div class="a thumb"></div>
<div class="a black"></div><div class="a" style="left:490px;top:930px;width:47px;height:2px;background:#0d2b5e"></div><svg class="a" style="left:1240px;top:0px" width="130" height="32" viewBox="1240 0 130 32">
<g stroke-linecap="round" stroke-linejoin="round" fill="none" stroke-width="3.3">
<path d="M1249.4 6.6L1255.5 7.6M1249.4 6.6L1250.6 13L1255.6 18.3" stroke="#7ac143"/>
<path d="M1249.4 25L1250.4 17.6M1249.4 25L1254 23.4L1261 17.2" stroke="#5091cd"/>
<path d="M1267 25L1259.6 23.8M1267 25L1265.8 18L1259.6 12.2" stroke="#f44321"/>
<path d="M1267 6.6L1265.8 14.2M1267 6.6L1262 8.8L1254.6 14" stroke="#f9a541"/>
</g>
<circle cx="1249.4" cy="6.6" r="3.3" fill="#7ac143"/>
<circle cx="1267" cy="6.6" r="3.3" fill="#f9a541"/>
<circle cx="1267" cy="25" r="3.3" fill="#f44321"/>
<circle cx="1249.4" cy="25" r="3.3" fill="#5091cd"/>
<g stroke="#fff" stroke-width="1.6" fill="none">
<path d="M1283.6 8.8V18.5Q1283.6 22.4 1279.5 22.4H1274.4"/>
<ellipse cx="1292.2" cy="17.65" rx="6.4" ry="4.75"/>
<ellipse cx="1307.35" cy="17.65" rx="6.2" ry="4.75"/>
<path d="M1317.5 23.2V17Q1317.5 12.9 1321.2 12.9Q1324.9 12.9 1324.9 17V23.2M1324.9 17Q1324.9 12.9 1328.5 12.9Q1332.1 12.9 1332.1 17V23.2"/>
<path d="M1335.6 8.8V23.2"/>
<ellipse cx="1345.6" cy="17.65" rx="5.8" ry="4.75"/>
<path d="M1353.4 12.1V23.2"/>
<path d="M1360.2 8.8V19.8" stroke-width="1.9"/>
</g>
<rect x="1359.3" y="21.6" width="1.9" height="1.7" fill="#fff"/>
<circle cx="1364.2" cy="10.5" r="1.5" fill="none" stroke="#bcc5d6" stroke-width="0.8"/>
</svg>
<div class="a" style="left:1387.5px;top:918.5px;width:0;height:0;border-left:4px solid transparent;border-right:4px solid transparent;border-top:4.5px solid #505050"></div>

</body></html>
